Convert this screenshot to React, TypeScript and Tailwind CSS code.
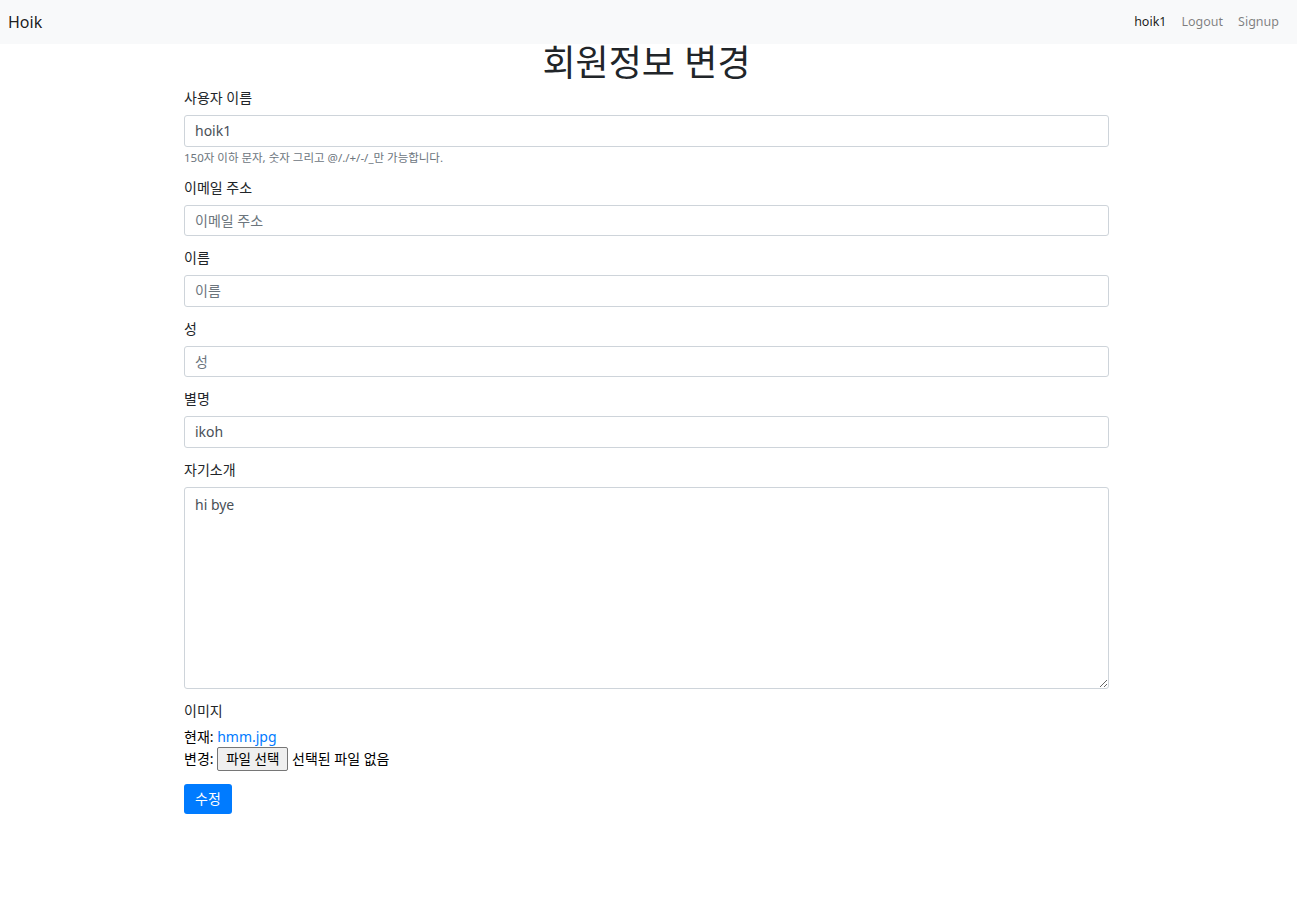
const font = { fontFamily: '"Noto Sans", "Noto Sans CJK KR", sans-serif' };

type Field = {
  label: string;
  value?: string;
  placeholder?: string;
  help?: string;
};

const fields: Field[] = [
  { label: "사용자 이름", value: "hoik1", help: "150자 이하 문자, 숫자 그리고 @/./+/-/_만 가능합니다." },
  { label: "이메일 주소", placeholder: "이메일 주소" },
  { label: "이름", placeholder: "이름" },
  { label: "성", placeholder: "성" },
  { label: "별명", value: "ikoh" },
];

function Navbar() {
  return (
    <nav className="flex h-[44px] items-center justify-between bg-[#f8f9fa] pl-[8px] pr-[18px]">
      <a className="text-[16px] text-black/90">Hoik</a>
      <div className="flex items-center gap-[15px] text-[12.5px]">
        <a className="text-black/90">hoik1</a>
        <a className="text-black/50">Logout</a>
        <a className="text-black/50">Signup</a>
      </div>
    </nav>
  );
}

export default function App() {
  return (
    <div className="min-h-screen bg-white text-[#212529]" style={font}>
      <Navbar />
      <div className="ml-[184px] w-[925px]">
        <h1 className="mb-[6px] text-center text-[36px] leading-[38px] font-normal">회원정보 변경</h1>
        <form className="text-[14px]">
          {fields.map((f) => (
            <div key={f.label} className="mb-[12px]">
              <label className="mb-[7px] block leading-[20px]">{f.label}</label>
              <input
                defaultValue={f.value}
                placeholder={f.placeholder}
                className="block h-[31.5px] w-full rounded-[3px] border border-[#ced4da] px-[10px] text-[14px] text-[#495057] placeholder:text-[#6c757d]"
              />
              {f.help && <p className="mt-[3px] text-[11.5px] leading-[16px] text-[#6c757d]">{f.help}</p>}
            </div>
          ))}
          <div className="mb-[12px]">
            <label className="mb-[7px] block leading-[20px]">자기소개</label>
            <textarea
              defaultValue="hi bye"
              className="block h-[202px] w-full rounded-[3px] border border-[#ced4da] px-[10px] py-[6px] text-[14px] text-[#495057]"
            />
          </div>
          <div className="mb-[13px]">
            <label className="mb-[5px] block leading-[20px]">이미지</label>
            <div className="text-[14px] leading-[21px] text-black">
              현재: <a className="text-[#007bff]">hmm.jpg</a>
              <br />
              변경:{" "}
              <button type="button" className="h-[24px] rounded-[2px] border border-[#767676] bg-[#efefef] px-[8px] text-[13.5px] leading-[22px] text-black">
                파일 선택
              </button>{" "}
              선택된 파일 없음
            </div>
          </div>
          <button type="button" className="h-[30px] rounded-[3px] bg-[#007bff] px-[11px] text-[14px] text-white">
            수정
          </button>
        </form>
      </div>
    </div>
  );
}
